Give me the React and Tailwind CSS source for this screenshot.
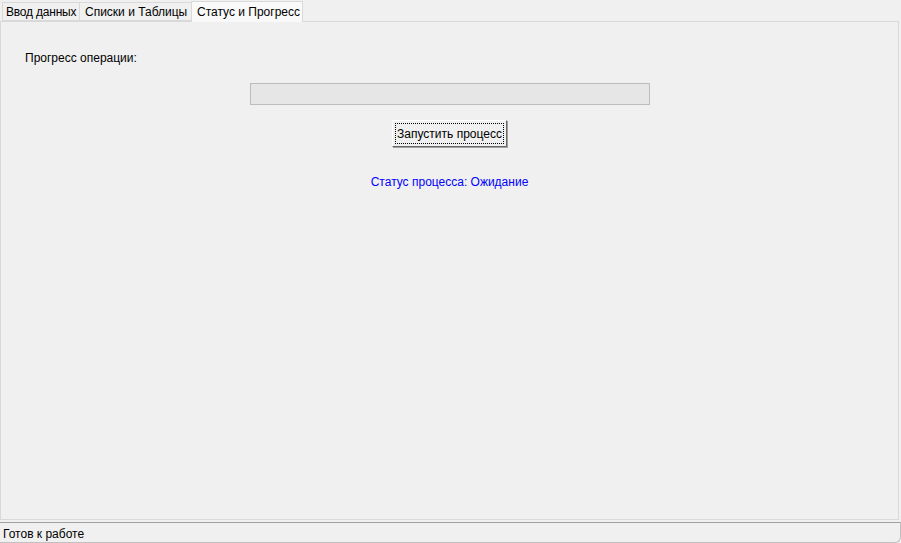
import React from 'react';

const tabs = [
    { label: 'Ввод данных', w: 'w-[78px] pl-[3px] tracking-[-0.2px]' },
    { label: 'Списки и Таблицы', w: 'w-[113px] pl-[5px]' },
    { label: 'Статус и Прогресс', w: 'w-[112px] pl-[5px]' },
];

export default function App() {
    const active = 2;

    return (
        <div
            className="w-[901px] h-[543px] bg-[#f0f0f0] flex flex-col text-[12px] text-black overflow-hidden"
            style={{ fontFamily: '"Liberation Sans", Arial, sans-serif' }}
        >
            {/* Notebook tabs */}
            <div className="h-[21px] flex items-end pl-[2px] relative z-10">
                {tabs.map((t, i) =>
                    i === active ? (
                        <div
                            key={t.label}
                            className={`${t.w} h-[21px] bg-[#f9f9f9] border border-b-0 border-[#d9d9d9] flex items-center leading-none -mb-px whitespace-nowrap overflow-hidden`}
                        >
                            {t.label}
                        </div>
                    ) : (
                        <div
                            key={t.label}
                            className={`${t.w} h-[19px] bg-[#f0f0f0] border border-[#d9d9d9] -mr-px flex items-center leading-none whitespace-nowrap overflow-hidden`}
                        >
                            {t.label}
                        </div>
                    )
                )}
            </div>

            {/* Tab panel */}
            <div className="flex-1 mr-[2px] border border-[#d9d9d9] bg-[#f0f0f0] flex flex-col">
                <div className="pl-[24px] pt-[28px] leading-[16px]">Прогресс операции:</div>

                <div className="flex justify-center mt-[17px]">
                    <div className="w-[400px] h-[22px] bg-[#e6e6e6] border border-[#bcbcbc]" />
                </div>

                <div className="flex justify-center mt-[15px]">
                    <button className="w-[115px] h-[27px] bg-[#f0f0f0] border border-t-white border-l-white border-r-[#696969] border-b-[#696969] shadow-[1px_1px_0_#a0a0a0] p-[2px]">
                        <span className="w-full h-full border border-dotted border-black flex items-center justify-center leading-none whitespace-nowrap">
                            Запустить процесс
                        </span>
                    </button>
                </div>

                <div className="text-center text-[#0000ff] mt-[27px] leading-[16px]">
                    Статус процесса: Ожидание
                </div>
            </div>

            {/* Status bar */}
            <div className="h-[21px] mt-[2px] border-t border-[#a0a0a0] bg-[#f0f0f0] flex items-center pl-[3px] pt-[2px] rounded-br-[6px] border-r border-b border-r-[#c0c0c0] border-b-[#c0c0c0]">
                Готов к работе
            </div>
        </div>
    );
}
